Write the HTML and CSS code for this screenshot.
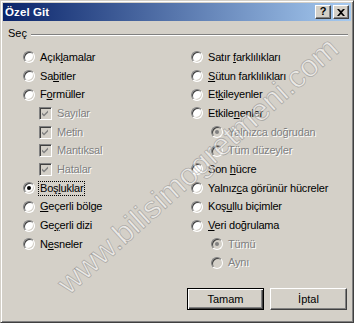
FILE: index.html
```html
<!DOCTYPE html>
<html lang="tr">
<head>
<meta charset="utf-8">
<title>Özel Git</title>
<link rel="stylesheet" href="styles.css">
</head>
<body>
<div class="window">
  <div class="titlebar">
    <span class="title">Özel Git</span>
    <div class="tbtns">
      <span class="tbtn tbtn-help">?</span>
      <span class="tbtn"><svg width="8" height="7" viewBox="0 0 8 7"><path d="M0 0h2l2 2 2-2h2L5 3.5 8 7H6L4 5 2 7H0l3-3.5z" fill="#000"/></svg></span>
    </div>
  </div>
  <div class="body">
    <div class="group-head"><span class="group-label">Seç</span><span class="etch"></span></div>
    <div class="cols">
      <div class="col">
        <div class="opt"><span class="radio"></span><span class="lbl">Açık<u>l</u>amalar</span></div>
        <div class="opt"><span class="radio"></span><span class="lbl">Sa<u>b</u>itler</span></div>
        <div class="opt"><span class="radio"></span><span class="lbl">F<u>o</u>rmüller</span></div>
        <div class="opt sub dis"><span class="check"><svg width="9" height="9" viewBox="0 0 9 9"><path d="M1 3.5l2 2 4-4v2l-4 4-2-2z" fill="#808080"/></svg></span><span class="lbl">Sayılar</span></div>
        <div class="opt sub dis"><span class="check"><svg width="9" height="9" viewBox="0 0 9 9"><path d="M1 3.5l2 2 4-4v2l-4 4-2-2z" fill="#808080"/></svg></span><span class="lbl">Metin</span></div>
        <div class="opt sub dis"><span class="check"><svg width="9" height="9" viewBox="0 0 9 9"><path d="M1 3.5l2 2 4-4v2l-4 4-2-2z" fill="#808080"/></svg></span><span class="lbl">Mantıksal</span></div>
        <div class="opt sub dis"><span class="check"><svg width="9" height="9" viewBox="0 0 9 9"><path d="M1 3.5l2 2 4-4v2l-4 4-2-2z" fill="#808080"/></svg></span><span class="lbl">Hatalar</span></div>
        <div class="opt"><span class="radio on"></span><span class="lbl focus">Boş<u>l</u>uklar</span></div>
        <div class="opt"><span class="radio"></span><span class="lbl"><u>G</u>eçerli bölge</span></div>
        <div class="opt"><span class="radio"></span><span class="lbl">Ge<u>ç</u>erli dizi</span></div>
        <div class="opt"><span class="radio"></span><span class="lbl">N<u>e</u>sneler</span></div>
      </div>
      <div class="col">
        <div class="opt"><span class="radio"></span><span class="lbl">Satır <u>f</u>arklılıkları</span></div>
        <div class="opt"><span class="radio"></span><span class="lbl"><u>S</u>ütun farklılıkları</span></div>
        <div class="opt"><span class="radio"></span><span class="lbl">Et<u>k</u>ileyenler</span></div>
        <div class="opt"><span class="radio"></span><span class="lbl">Etkile<u>n</u>enler</span></div>
        <div class="opt sub2 dis"><span class="radio on"></span><span class="lbl">Yalnızca doğrudan</span></div>
        <div class="opt sub2 dis"><span class="radio"></span><span class="lbl">Tüm düzeyler</span></div>
        <div class="opt"><span class="radio"></span><span class="lbl">Son <u>h</u>ücre</span></div>
        <div class="opt"><span class="radio"></span><span class="lbl">Yalnız<u>c</u>a görünür hücreler</span></div>
        <div class="opt"><span class="radio"></span><span class="lbl">Koş<u>u</u>llu biçimler</span></div>
        <div class="opt"><span class="radio"></span><span class="lbl"><u>V</u>eri doğrulama</span></div>
        <div class="opt sub2 dis"><span class="radio on"></span><span class="lbl">Tümü</span></div>
        <div class="opt sub2 dis"><span class="radio"></span><span class="lbl">Aynı</span></div>
      </div>
    </div>
    <div class="actions">
      <button class="btn btn-default" type="button">Tamam</button>
      <button class="btn" type="button">İptal</button>
    </div>
  </div>
  <div class="watermark">www.bilisimogretmeni.com</div>
</div>
</body>
</html>
```

FILE: styles.css
```css
html, body {
  margin: 0;
  padding: 0;
  background: #d4d0c8;
}
body {
  font-family: "Liberation Sans", Arial, sans-serif;
  font-size: 11px;
  color: #000;
}
.window {
  position: relative;
  box-sizing: border-box;
  width: 354px;
  height: 323px;
  background: #d4d0c8;
  border: 1px solid;
  border-color: #d4d0c8 #404040 #404040 #d4d0c8;
  box-shadow: inset 1px 1px #fff, inset -1px -1px #808080;
  padding: 2px;
  overflow: hidden;
}
.titlebar {
  height: 18px;
  display: flex;
  align-items: center;
  justify-content: space-between;
  background: linear-gradient(to right, #0a246a, #a6caf0);
  padding: 0 2px 0 2px;
}
.title {
  color: #fff;
  font-weight: bold;
  font-size: 11.5px;
  letter-spacing: 0.1px;
}
.tbtns {
  display: flex;
  gap: 2px;
}
.tbtn {
  box-sizing: border-box;
  width: 16px;
  height: 14px;
  display: flex;
  align-items: center;
  justify-content: center;
  background: #d4d0c8;
  border: 1px solid;
  border-color: #fff #404040 #404040 #fff;
  box-shadow: inset -1px -1px #808080;
}
.tbtn-help {
  font-weight: bold;
  font-size: 11px;
  line-height: 1;
  padding-bottom: 1px;
}
.body {
  padding: 0 2px 0 5px;
}
.group-head {
  display: flex;
  align-items: center;
  height: 14px;
  margin-top: 5px;
}
.group-label {
  padding: 0 4px 0 0;
}
.etch {
  flex: 1;
  height: 0;
  border-top: 1px solid #808080;
  border-bottom: 1px solid #fff;
  margin-top: 3px;
  margin-right: 1px;
}
.cols {
  display: grid;
  grid-template-columns: 168px 1fr;
  margin-top: 8px;
  padding-left: 15px;
}
.opt {
  height: 18.7px;
  display: flex;
  align-items: center;
  white-space: nowrap;
}
.opt.sub {
  padding-left: 16px;
}
.opt.sub2 {
  padding-left: 20px;
}
.lbl {
  margin-left: 3px;
  letter-spacing: -0.2px;
  border: 1px solid transparent;
  padding: 0 1px;
  line-height: 13px;
}
.lbl.focus {
  border: 1px dotted #000;
}
.radio {
  position: relative;
  box-sizing: border-box;
  width: 12px;
  height: 12px;
  flex: none;
  border-radius: 50%;
  background: #fff;
  border: 1px solid;
  border-color: #808080 #fff #fff #808080;
  box-shadow: inset 1px 1px #404040, inset -1px -1px #d4d0c8;
}
.radio.on::after {
  content: "";
  position: absolute;
  left: 3px;
  top: 3px;
  width: 4px;
  height: 4px;
  border-radius: 50%;
  background: #000;
}
.check {
  box-sizing: border-box;
  width: 13px;
  height: 13px;
  flex: none;
  display: flex;
  align-items: center;
  justify-content: center;
  background: #fff;
  border: 1px solid;
  border-color: #808080 #fff #fff #808080;
  box-shadow: inset 1px 1px #404040, inset -1px -1px #d4d0c8;
}
.dis .lbl {
  color: #808080;
  text-shadow: 1px 1px #fff;
}
.dis .radio,
.dis .check {
  background: #d4d0c8;
}
.dis .radio.on::after {
  background: #808080;
}
.actions {
  display: flex;
  justify-content: flex-end;
  gap: 6px;
  margin-top: 16px;
  padding-right: 2px;
}
.btn {
  box-sizing: border-box;
  width: 77px;
  height: 22px;
  font-family: "Liberation Sans", Arial, sans-serif;
  font-size: 11px;
  font-weight: normal;
  color: #000;
  background: #d4d0c8;
  border: 1px solid;
  border-color: #fff #404040 #404040 #fff;
  box-shadow: inset -1px -1px #808080;
  padding: 0;
  border-radius: 0;
}
.btn-default {
  border-color: #000;
  box-shadow: inset 1px 1px #fff, inset -1px -1px #404040, inset -2px -2px #808080;
}
.watermark {
  position: absolute;
  left: -3px;
  top: 149px;
  width: 400px;
  line-height: 32px;
  text-align: center;
  font-family: "Liberation Sans", Arial, sans-serif;
  font-size: 31px;
  color: rgba(255, 255, 255, 0.55);
  -webkit-text-stroke: 0.8px rgba(110, 110, 110, 0.45);
  transform: rotate(-42deg);
  pointer-events: none;
  white-space: nowrap;
}
```
